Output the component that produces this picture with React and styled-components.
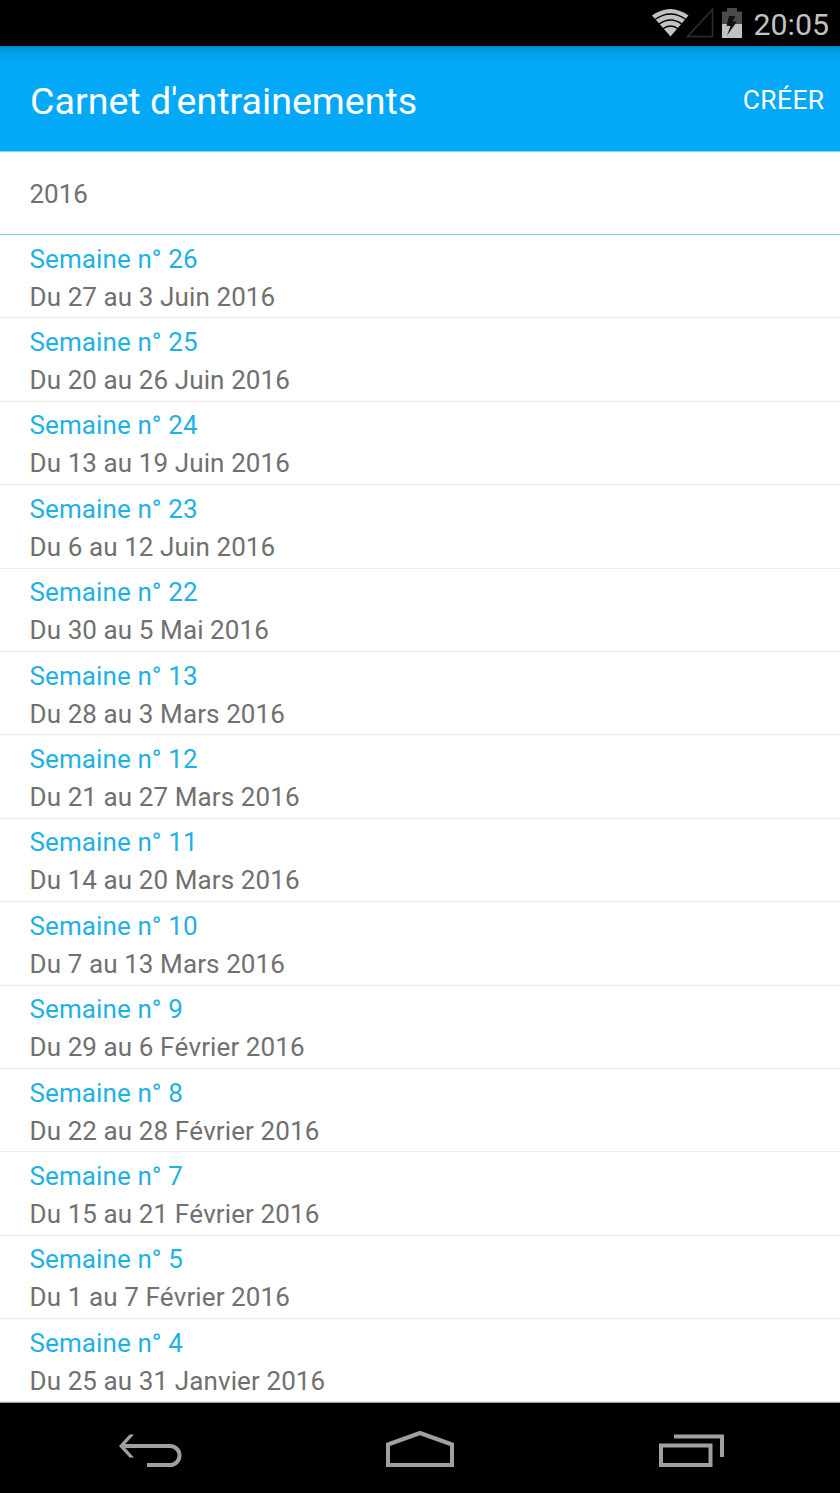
import React from 'react';
import styled, { createGlobalStyle } from 'styled-components';

const GlobalStyle = createGlobalStyle`
    * {
        box-sizing: border-box;
    }

    body {
        margin: 0;
        background-color: #fff;
        font-family: Roboto, "Liberation Sans", sans-serif;
    }
`;

const Screen = styled.div`
    display: flex;
    flex-direction: column;
    width: 840px;
    height: 1493px;
    overflow: hidden;
`;

const StatusBar = styled.div`
    display: flex;
    align-items: center;
    justify-content: flex-end;
    flex: none;
    height: 46px;
    padding-right: 11px;
    background-color: #000;
    color: #c2c2c2;

    & > svg {
        display: block;
        margin-right: 9.5px;
    }
`;

const Clock = styled.span`
    font-size: 30.3px;
    line-height: 36px;
    padding-top: 3px;
`;

const Header = styled.header`
    display: flex;
    align-items: center;
    justify-content: space-between;
    flex: none;
    height: 106px;
    padding: 0 15.5px 0 30px;
    border-bottom: 1px solid #7fd2fb;
    background: linear-gradient(#0280b8 0, #0396da 2px, #03a1ea 7px, #03a9f6 20px, #03a9f6 100%);
    color: #fff;
`;

const Title = styled.h1`
    margin: 0;
    font-size: 37.6px;
    font-weight: 400;
    line-height: 44px;
    padding-top: 4px;
`;

const CreateButton = styled.button`
    border: 0;
    padding: 3px 0 0;
    background: none;
    color: inherit;
    font: 400 26.4px/30px Roboto, sans-serif;
    font-kerning: none;
    letter-spacing: 0.4px;
`;

const Year = styled.h2`
    display: flex;
    align-items: center;
    flex: none;
    height: 83px;
    margin: 0;
    padding: 2px 0 0 29.5px;
    border-bottom: 1px solid #86cfee;
    color: #707070;
    font-size: 26px;
    font-weight: 400;
`;

const Weeks = styled.ul`
    flex: 1;
    min-height: 0;
    margin: 0;
    padding: 0;
    list-style: none;
    overflow: hidden;
`;

const Week = styled.li`
    height: 83.4px;
    padding: 4.7px 0 0 29.5px;
    border-bottom: 1px solid #ececec;
    font-size: 26px;
    line-height: 38px;
    font-kerning: none;
    letter-spacing: 0.1px;
`;

const WeekName = styled.div`
    color: #1fb0e5;
`;

const WeekDates = styled.div`
    color: #707070;
`;

const NavBar = styled.nav`
    display: flex;
    flex: none;
    height: 91px;
    border-top: 1px solid #a0a0a0;
    background-color: #000;

    & > svg {
        flex: none;
        fill: none;
        stroke: #a0a0a0;
        stroke-width: 4;
    }
`;

const weeks = [
    { number: 26, dates: 'Du 27 au 3 Juin 2016' },
    { number: 25, dates: 'Du 20 au 26 Juin 2016' },
    { number: 24, dates: 'Du 13 au 19 Juin 2016' },
    { number: 23, dates: 'Du 6 au 12 Juin 2016' },
    { number: 22, dates: 'Du 30 au 5 Mai 2016' },
    { number: 13, dates: 'Du 28 au 3 Mars 2016' },
    { number: 12, dates: 'Du 21 au 27 Mars 2016' },
    { number: 11, dates: 'Du 14 au 20 Mars 2016' },
    { number: 10, dates: 'Du 7 au 13 Mars 2016' },
    { number: 9, dates: 'Du 29 au 6 Février 2016' },
    { number: 8, dates: 'Du 22 au 28 Février 2016' },
    { number: 7, dates: 'Du 15 au 21 Février 2016' },
    { number: 5, dates: 'Du 1 au 7 Février 2016' },
    { number: 4, dates: 'Du 25 au 31 Janvier 2016' },
];

// wifi, signal and battery share one drawing
const StatusIcons = () => (
    <svg width="92" height="46" viewBox="0 0 92 46">
        <path d="M0 15.5 Q18.5 2.5 36.5 15.5 L18.5 36.5Z" fill="#c2c2c2" />
        <g fill="none" stroke="#000" strokeWidth="1.4">
            <path d="M3 19.5 Q18.5 8.5 34 19.5" />
            <path d="M6.5 24.5 Q18.5 15.5 30.5 24.5" />
            <path d="M10.5 29 Q18.5 23 26.5 29" />
        </g>
        <path d="M35.5 36.5 L60.5 9.5 V36.5Z" fill="none" stroke="#303030" strokeWidth="1.5" />
        <path d="M70 11.5 H75 V8 H85 V11.5 H90 V24 H70Z" fill="#4b4b4b" />
        <path d="M70 24 H90 V38 H70Z" fill="#c2c2c2" />
        <path d="M77 16 H83.5 L80.5 21.5 H85 L75 35.5 L78.5 26 H74.5Z" fill="#111" />
    </svg>
);

const AppHeader = () => (
    <Header>
        <Title>Carnet d'entrainements</Title>
        <CreateButton>CRÉER</CreateButton>
    </Header>
);

const App = () => {
    return (<>
        <GlobalStyle />
        <Screen>
            <StatusBar>
                <StatusIcons />
                <Clock>20:05</Clock>
            </StatusBar>
            <AppHeader />
            <Year>2016</Year>
            <Weeks>
                {weeks.map(({ number, dates }) => (
                    <Week key={number}>
                        <WeekName>Semaine n° {number}</WeekName>
                        <WeekDates>{dates}</WeekDates>
                    </Week>
                ))}
            </Weeks>
            <NavBar>
                <svg width="280" height="90" viewBox="0 1 280 90">
                    <path d="M122 44 H170 A9.5 9.5 0 0 1 170 63 H147" />
                    <path d="M119 44 L129.5 32.5 H134 L123.5 44 L134 55.5 H129.5Z" fill="#a0a0a0" stroke="none" />
                </svg>
                <svg width="280" height="90" viewBox="280 1 280 90">
                    <path d="M388 63 V42.5 L420 31 L452 42.5 V63Z" />
                </svg>
                <svg width="280" height="90" viewBox="560 1 280 90">
                    <path d="M661 43.5 H710.5 V63 H661Z" />
                    <path d="M674 34.5 H722 V55" />
                </svg>
            </NavBar>
        </Screen>
    </>);
};

export default App;
